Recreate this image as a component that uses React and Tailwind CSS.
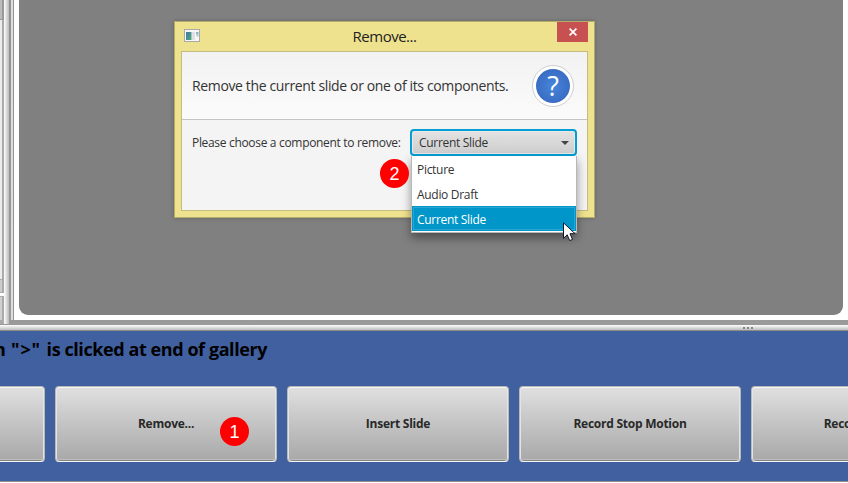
const FONT = "font-['Open_Sans','Noto_Sans',sans-serif]";

function GrayButton({ children, className = "tracking-[-0.25px]" }) {
  return (
    <div className={`h-[76px] w-[222px] shrink-0 rounded-[4px] border border-[#b9b9b9] border-b-[#f4f4f4] bg-linear-to-b from-[#e0e0e0] to-[#a8a8a8] shadow-[inset_0_1px_0_#f6f6f6,inset_1px_0_0_#e4e4e4,inset_-1px_0_0_#e4e4e4,inset_0_-1px_0_#858585,inset_0_-2px_0_#bcbcbc] ${className}`}>
      <div className="flex h-full items-center justify-center text-[12px] font-bold whitespace-nowrap text-[#292929]">
        {children}
      </div>
    </div>
  );
}

function Badge({ children, className }) {
  return (
    <div className={`absolute flex size-[29px] items-center justify-center rounded-full bg-[#ff0000] font-['Liberation_Sans',Arial,sans-serif] text-[18px] leading-none text-white ${className}`}>
      {children}
    </div>
  );
}

function WindowIcon() {
  return (
    <svg width="16" height="14" viewBox="0 0 16 14">
      <defs>
        <linearGradient id="wi" x1="0" y1="0" x2="1" y2="1">
          <stop offset="0" stopColor="#4278a8" />
          <stop offset="1" stopColor="#4fa879" />
        </linearGradient>
      </defs>
      <rect x="0.5" y="0.5" width="15" height="12" fill="#f7f7f7" stroke="#a9aaa9" />
      <rect x="2" y="3" width="5.500" height="8" fill="url(#wi)" />
      <rect x="8" y="3" width="3" height="8" fill="#e0e0e4" />
      <rect x="12" y="3" width="2.500" height="2.500" fill="#8fb5cd" />
      <rect x="12.500" y="5.500" width="2" height="2" fill="#a9cbb7" />
    </svg>
  );
}

function QuestionIcon() {
  return (
    <div className="flex size-[42px] items-center justify-center rounded-full border border-[#cfcfcf] bg-white">
      <div className="flex size-[34px] items-center justify-center rounded-full bg-radial from-[#4586dc] to-[#3562b8] text-[27px] leading-none text-white">
        ?
      </div>
    </div>
  );
}

function Cursor() {
  return (
    <svg className="absolute left-[563px] top-[222px]" width="14" height="21" viewBox="0 0 14 21">
      <path d="M.5.8V16.300L4.200 12.800L6.700 18.600L9.500 17.400L7 11.700H12Z" fill="#fff" stroke="#111827" />
    </svg>
  );
}

function Dialog() {
  return (
    <div className="absolute left-[174px] top-[21px] flex h-[197px] w-[421px] flex-col border border-[#b5ab6b] bg-[#efe28f] px-[6px] pb-[6px] shadow-[0_0_4px_rgba(0,0,0,0.25)]">
      <div className="relative flex h-[29px] shrink-0 items-center justify-center">
        <div className="absolute left-[3px] top-[7px]"><WindowIcon /></div>
        <span className="mb-[2px] text-[15px] leading-[20px] tracking-[-0.5px] text-[#222]">Remove...</span>
        <div className="absolute right-0 top-0 flex h-[20px] w-[31px] items-center justify-center bg-[#c75050]">
          <svg width="8" height="8" viewBox="0 0 8 8"><path d="M.6.600L7.400 7.400M7.400.6L.6 7.400" stroke="#fff" strokeWidth="1.700" /></svg>
        </div>
      </div>
      <div className="flex grow flex-col border border-[#c5bd80] bg-[#f4f4f4]">
        <div className="flex h-[68px] shrink-0 items-center justify-between border-b border-[#c4c4c4] bg-linear-to-b from-[#f2f2f2] to-[#fbfbfb] pl-[10px] pr-[13px]">
          <span className="text-[14px] tracking-[-0.36px] whitespace-nowrap text-[#333]">Remove the current slide or one of its components.</span>
          <QuestionIcon />
        </div>
        <div className="flex h-[46px] items-center pl-[10px]">
          <span className="w-[218px] shrink-0 text-[12px] tracking-[-0.32px] whitespace-nowrap text-[#333]">Please choose a component to remove:</span>
          <div className="mb-[1px] flex h-[27px] w-[167px] shrink-0 items-center justify-between rounded-[4px] border-2 border-[#039ed3] bg-linear-to-b from-[#e3e3e3] to-[#cdcdcd] pr-[6px] pl-[7px] text-[12px] tracking-[-0.3px] text-[#333] shadow-[inset_0_0_0_1px_#e9e9e9]">
            Current Slide
            <svg width="8" height="4" viewBox="0 0 8 4"><path d="M0 0H8L4 4Z" fill="#444" /></svg>
          </div>
        </div>
      </div>
    </div>
  );
}

function Dropdown() {
  return (
    <div className="absolute left-[411px] top-[156px] h-[77px] w-[166px] border border-t-0 border-[#b8b8b8] bg-white text-[12px] tracking-[-0.3px] text-[#333] shadow-[0_5px_9px_rgba(0,0,0,0.4)]">
      <div className="flex h-[25px] items-center pt-[2px] pl-[5px]">Picture</div>
      <div className="flex h-[25px] items-center pt-[2px] pl-[5px]">Audio Draft</div>
      <div className="h-[25px] bg-[#0096c9] p-[1px]">
        <div className="flex h-full items-center border border-[#29a5d3] pl-[3px] pt-[2px] text-white">Current Slide</div>
      </div>
    </div>
  );
}

export default function App() {
  return (
    <div className={`relative flex h-[483px] w-[848px] flex-col overflow-hidden bg-white ${FONT}`}>
      <div className="flex h-[324px] shrink-0">
        <div className="flex w-[4px] shrink-0 flex-col">
          <div className="h-[20px] border-r-2 border-b border-[#999] bg-[#bcbcbc]" />
          <div className="h-[260px] border-r-2 border-b border-[#aaa] bg-[#ececec]" />
          <div className="h-[12px] border-r-2 border-[#aaa] bg-[#ccc]" />
          <div className="h-[5px] border-y border-[#aaa] bg-white" />
          <div className="h-[25px] border-r-2 border-b-2 border-[#aaa] bg-[#d0d0d0]" />
          <div className="h-[2px] bg-[#aaa]" />
        </div>
        <div className="w-[5px] shrink-0 bg-linear-to-r from-[#fff] to-[#bbb]" />
        <div className="flex grow flex-col bg-linear-to-b from-[#929292] to-[#9a9a9a] pl-[2px]">
          <div className="flex h-[320px] border-l-2 border-[#dedede]">
            <div className="w-px bg-[#929292]" />
            <div className="grow bg-white pr-[5px] pb-[5px] pl-[5px]">
              <div className="h-full rounded-b-[9px] bg-[#808080]" />
            </div>
          </div>
        </div>
      </div>
      <div className="h-[1px] shrink-0 bg-[#999]" />
      <div className="flex h-[6px] shrink-0 justify-end border-b border-[#8c8c8c] bg-linear-to-b from-white to-[#bdbdbd] pt-[2px] pr-[95px]">
        <div className="flex gap-[2px]">
          <i className="size-[2px] bg-[#858585]" />
          <i className="size-[2px] bg-[#858585]" />
          <i className="size-[2px] bg-[#858585]" />
        </div>
      </div>
      <div className="h-[151px] shrink-0 overflow-hidden border-b border-[#8e8e8e] bg-[#4160a0]">
        <div className="flex h-[55px] items-start pt-[6px]">
          <span className="-ml-[6px] text-[18px] leading-[24px] font-bold tracking-[-0.42px] whitespace-pre text-black">
            n<span className="tracking-[0.9px]"> "&gt;" </span>is clicked at end of gallery
          </span>
        </div>
        <div className="-ml-[177px] flex gap-[10px]">
          <GrayButton />
          <GrayButton>Remove...</GrayButton>
          <GrayButton>Insert Slide</GrayButton>
          <GrayButton>Record Stop Motion</GrayButton>
          <GrayButton>Record Audio</GrayButton>
        </div>
      </div>
      <Dialog />
      <Dropdown />
      <Badge className="left-[380px] top-[159px]">2</Badge>
      <Badge className="left-[220px] top-[417px]">1</Badge>
      <Cursor />
    </div>
  );
}
